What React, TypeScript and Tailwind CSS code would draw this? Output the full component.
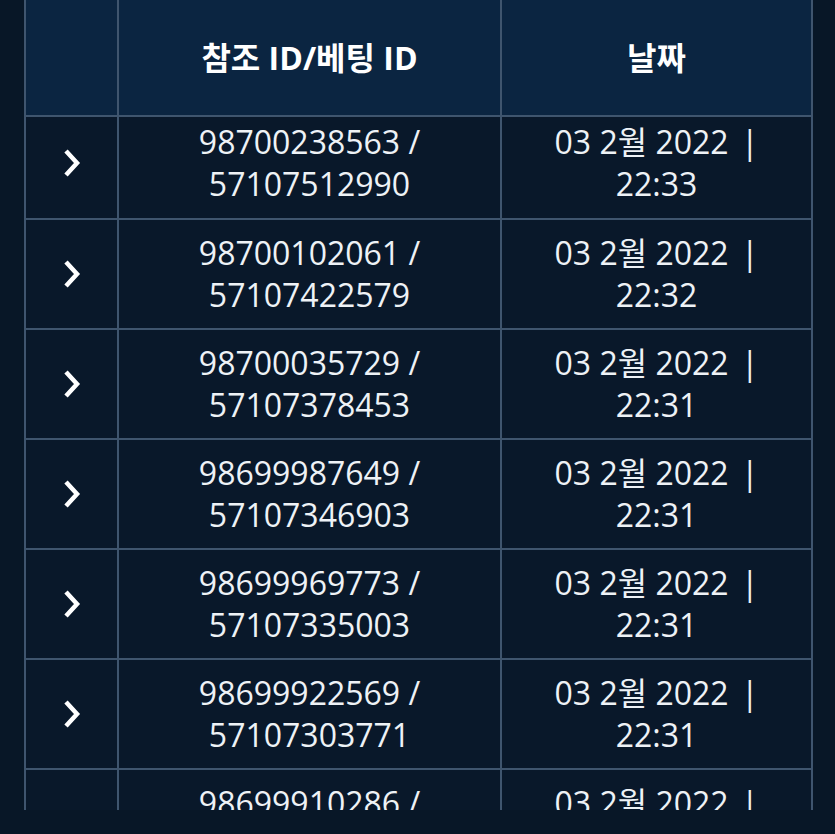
const rows = [
  { ref: "98700238563", bet: "57107512990", date: "03 2월 2022", time: "22:33" },
  { ref: "98700102061", bet: "57107422579", date: "03 2월 2022", time: "22:32" },
  { ref: "98700035729", bet: "57107378453", date: "03 2월 2022", time: "22:31" },
  { ref: "98699987649", bet: "57107346903", date: "03 2월 2022", time: "22:31" },
  { ref: "98699969773", bet: "57107335003", date: "03 2월 2022", time: "22:31" },
  { ref: "98699922569", bet: "57107303771", date: "03 2월 2022", time: "22:31" },
  { ref: "98699910286", bet: "57107290114", date: "03 2월 2022", time: "22:31" },
];

function Chevron() {
  return (
    <svg width="20" height="32" viewBox="0 0 20 32" fill="none" className="mx-auto block">
      <polyline points="4,4 15,16 4,28" stroke="white" strokeWidth="4.5" strokeLinejoin="miter" />
    </svg>
  );
}

export default function App() {
  return (
    <div
      className="h-[834px] w-[835px] overflow-hidden bg-[#081727] pl-[24px]"
      style={{ fontFamily: '"Open Sans", "Noto Sans CJK KR", sans-serif' }}
    >
      <div className="h-[810px] w-[790px] overflow-hidden">
        <table className="w-[787px] table-fixed border-collapse text-center text-[32px] leading-[42px] text-[#eef2f6]">
          <colgroup>
            <col className="w-[93px]" />
            <col className="w-[383px]" />
            <col className="w-[311px]" />
          </colgroup>
          <thead>
            <tr className="h-[116px] bg-[#0b2541]">
              <th className="border-2 border-t-0 border-[#3f556e]" />
              <th className="border-2 border-t-0 border-[#3f556e] font-bold text-white">참조 ID/베팅 ID</th>
              <th className="border-2 border-t-0 border-[#3f556e] font-bold text-white">날짜</th>
            </tr>
          </thead>
          <tbody>
            {rows.map((r, i) => {
              const pad = i === 0 ? "pb-[9px]" : "";
              return (
                <tr key={r.ref} className={`bg-[#09182a] ${i === 0 ? "h-[103px]" : "h-[110px]"}`}>
                  <td className={`border-2 border-[#3f556e] align-middle ${pad}`}>
                    <Chevron />
                  </td>
                  <td className={`border-2 border-[#3f556e] px-4 ${pad}`}>
                    {r.ref} /<br />
                    {r.bet}
                  </td>
                  <td className={`border-2 border-[#3f556e] px-4 ${pad}`}>
                    {r.date} <span className="ml-[4px]">|</span>
                    <br />
                    {r.time}
                  </td>
                </tr>
              );
            })}
          </tbody>
        </table>
      </div>
    </div>
  );
}
